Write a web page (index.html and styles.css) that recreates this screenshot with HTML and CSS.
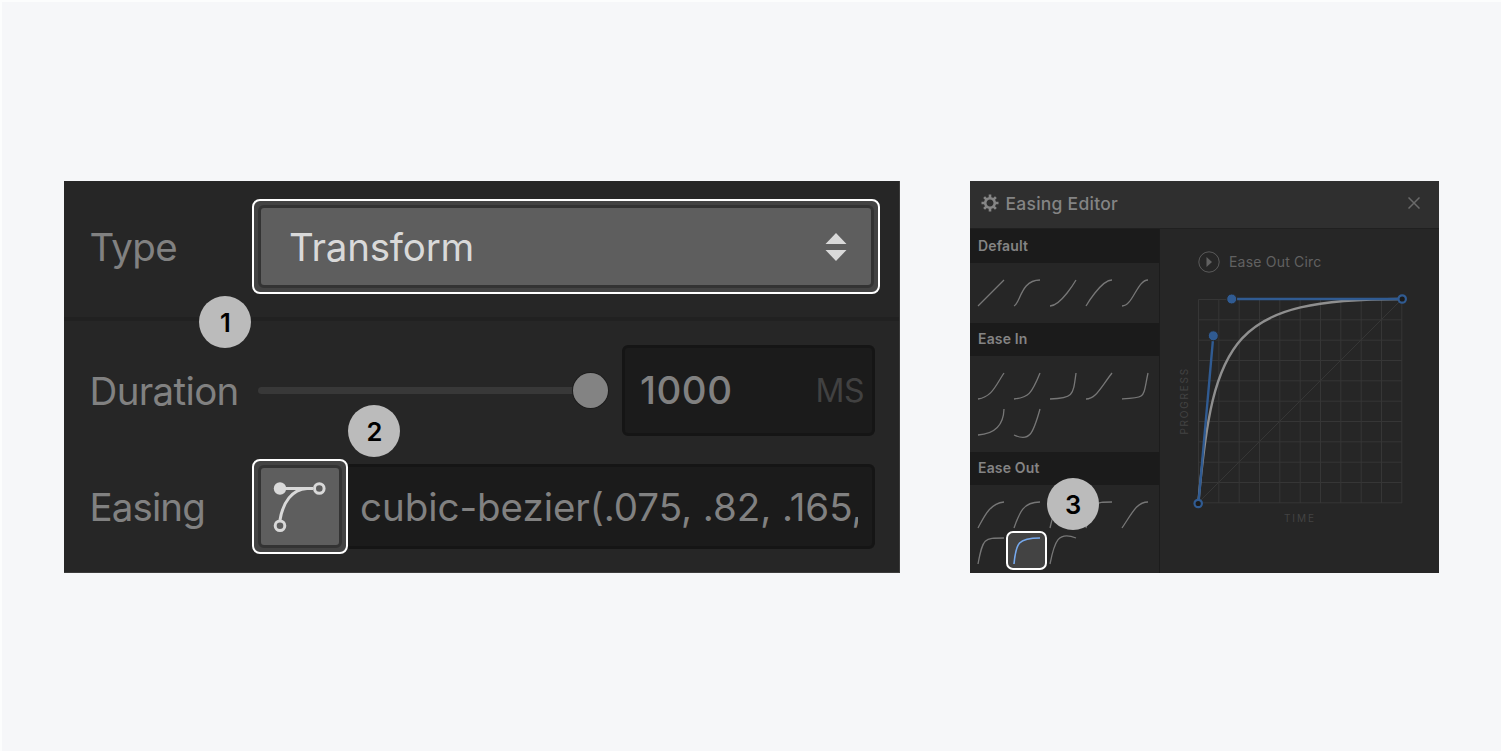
FILE: index.html
```html
<!DOCTYPE html>
<html lang="en">
<head>
  <meta charset="utf-8">
  <title>Easing Editor</title>
  <link rel="stylesheet" href="styles.css">
</head>
<body>
  <main class="stage">
    <section class="panel settings">
      <div class="row row-type">
        <label class="label label-type">Type</label>
        <div class="highlight highlight-select">
          <div class="select">
            <span class="select-value">Transform</span>
            <svg class="arrows" width="22" height="28" viewBox="0 0 22 28">
              <path d="M11 0L21.500 11H.5zM.5 17H21.500L11 28z"/>
            </svg>
          </div>
        </div>
      </div>
      <div class="row row-duration">
        <label class="label label-duration">Duration</label>
        <div class="slider">
          <div class="track"></div>
          <div class="knob"></div>
        </div>
        <div class="input input-duration">
          <span class="number">1000</span>
          <span class="unit">MS</span>
        </div>
      </div>
      <div class="row row-easing">
        <label class="label label-easing">Easing</label>
        <div class="highlight highlight-button">
          <div class="curve-button">
            <svg width="54" height="52" viewBox="0 0 54 52">
              <path class="stroke" d="M7 7.500H40M7 39C10 21 19 8.500 34 7.500"/>
              <circle class="dot" cx="7" cy="7.500" r="6.200"/>
              <circle class="stroke" cx="46.300" cy="7.500" r="4.800"/>
              <circle class="stroke" cx="7" cy="44.800" r="4.800"/>
            </svg>
          </div>
        </div>
        <div class="input input-easing"><span class="bezier">cubic-bezier(.075, .82, .165,</span></div>
      </div>
      <span class="badge badge-1">1</span>
      <span class="badge badge-2">2</span>
    </section>

    <section class="panel editor">
      <header class="editor-header">
        <svg class="gear" width="18" height="18" viewBox="-9 -9 18 18">
          <circle r="4.800"/>
          <path d="M0-5V-8.500M0 5V8.500M-5 0H-8.500M5 0H8.500M3.500-3.500L5.900-5.900M-3.500-3.500L-5.900-5.900M3.500 3.500L5.900 5.900M-3.500 3.500L-5.900 5.900"/>
        </svg>
        <h1 class="title">Easing Editor</h1>
        <svg class="close" width="12" height="12" viewBox="0 0 12 12"><path d="M.5 .5L11.500 11.500M11.500 .5L.5 11.500"/></svg>
      </header>
      <div class="editor-body">
        <aside class="sidebar">
          <h2 class="group-title group-title-first">Default</h2>
          <div class="curves curves-default">
            <svg class="curve" viewBox="0 0 1 1"><path d="M0 1L1 0"/></svg>
            <svg class="curve" viewBox="0 0 1 1"><path d="M0 1C.25 .9 .25 0 1 0"/></svg>
            <svg class="curve" viewBox="0 0 1 1"><path d="M0 1C.42 1 1 0 1 0"/></svg>
            <svg class="curve" viewBox="0 0 1 1"><path d="M0 1C0 1 .58 0 1 0"/></svg>
            <svg class="curve" viewBox="0 0 1 1"><path d="M0 1C.42 1 .58 0 1 0"/></svg>
          </div>
          <h2 class="group-title">Ease In</h2>
          <div class="curves curves-in">
            <svg class="curve" viewBox="0 0 1 1"><path d="M0 1C.55 .915 .68 .47 1 0"/></svg>
            <svg class="curve" viewBox="0 0 1 1"><path d="M0 1C.55 .945 .675 .81 1 0"/></svg>
            <svg class="curve" viewBox="0 0 1 1"><path d="M0 1C.895 .97 .885 .88 1 0"/></svg>
            <svg class="curve" viewBox="0 0 1 1"><path d="M0 1C.37 1 .545 .585 1 0"/></svg>
            <svg class="curve" viewBox="0 0 1 1"><path d="M0 1C.95 .95 .795 .965 1 0"/></svg>
            <svg class="curve" viewBox="0 0 1 1"><path d="M0 1C.6 .96 .98 .665 1 0"/></svg>
            <svg class="curve" viewBox="0 0 1 1"><path d="M0 1C.6 1.280 .735 .955 1 0"/></svg>
          </div>
          <h2 class="group-title">Ease Out</h2>
          <div class="curves curves-out">
            <svg class="curve" viewBox="0 0 1 1"><path d="M0 1C.25 .54 .45 .06 1 0"/></svg>
            <svg class="curve" viewBox="0 0 1 1"><path d="M0 1C.215 .39 .355 0 1 0"/></svg>
            <svg class="curve" viewBox="0 0 1 1"><path d="M0 1C.165 .16 .44 0 1 0"/></svg>
            <svg class="curve" viewBox="0 0 1 1"><path d="M0 1C.23 0 .32 0 1 0"/></svg>
            <svg class="curve" viewBox="0 0 1 1"><path d="M0 1C.39 .425 .565 0 1 0"/></svg>
            <svg class="curve" viewBox="0 0 1 1"><path d="M0 1C.19 0 .22 0 1 0"/></svg>
            <div class="curve-selected">
              <svg class="curve" viewBox="0 0 1 1"><path d="M0 1C.075 .18 .165 0 1 0"/></svg>
            </div>
            <svg class="curve" viewBox="0 0 1 1"><path d="M0 1C.175 .115 .32 -.275 1 0"/></svg>
          </div>
        </aside>
        <div class="preview">
          <div class="preview-head">
            <svg width="22" height="22" viewBox="0 0 22 22">
              <circle class="play-ring" cx="11" cy="11" r="10.200"/>
              <path class="play-arrow" d="M8.500 6L14 11L8.500 16z"/>
            </svg>
            <span class="preview-name">Ease Out Circ</span>
          </div>
          <div class="chart-row">
            <span class="axis axis-y">PROGRESS</span>
            <svg class="chart" width="204" height="204" viewBox="0 0 204 204">
              <path class="grid" d="M.5 .5H204M.5 20.800H204M.5 41.200H204M.5 61.500H204M.5 81.800H204M.5 102.200H204M.5 122.500H204M.5 142.800H204M.5 163.200H204M.5 183.500H204M.5 203.800H204"/>
              <path class="grid" d="M.5 .5V204M20.800 .5V204M41.200 .5V204M61.500 .5V204M81.800 .5V204M102.200 .5V204M122.500 .5V204M142.800 .5V204M163.200 .5V204M183.500 .5V204M203.800 .5V204"/>
              <path class="diagonal" d="M0 204L204 0"/>
              <path class="ease" d="M.3 204C15.500 37 34 0 204 0"/>
              <path class="handle" d="M.5 204L15.300 37M33.700 0H204"/>
              <circle class="point" cx="15.300" cy="36.800" r="5"/>
              <circle class="point" cx="33.700" cy="0" r="5"/>
              <circle class="anchor" cx=".2" cy="204.500" r="3.700"/>
              <circle class="anchor" cx="204.200" cy="0" r="3.700"/>
            </svg>
          </div>
          <span class="axis axis-x">TIME</span>
        </div>
      </div>
      <span class="badge badge-3">3</span>
    </section>
  </main>
</body>
</html>
```
FILE: styles.css
```css
* {
  box-sizing: border-box;
}

body {
  margin: 0;
  font-family: Inter, "Liberation Sans", sans-serif;
  background-color: #f6f7f9;
}

.stage {
  display: flex;
  align-items: flex-start;
  gap: 70px;
  height: 751px;
  padding: 179px 0 0 62px;
  border-top: 2px solid #fcfdfd;
  border-left: 2px solid #fcfdfd;
  overflow: hidden;
}

.panel {
  position: relative;
  height: 392px;
  background-color: #262626;
}

/* Left panel */
.settings {
  width: 836px;
  border-right: 1px solid #3c3c3c;
  border-bottom: 1px solid #3c3c3c;
  color: #818181;
  font-size: 38.5px;
}

.row {
  display: flex;
  align-items: center;
}

.row-type {
  height: 139.5px;
  padding: 0 0 4px;
  border-bottom: 4px solid #212121;
}

.row-duration {
  height: 91px;
  margin-top: 24px;
}

.row-easing {
  height: 95px;
  margin-top: 23px;
}

.label {
  width: 188px;
  padding-left: 25.5px;
  letter-spacing: -0.65px;
  white-space: nowrap;
}

.label-duration {
  padding-top: 1px;
}

.label-easing {
  padding-top: 2px;
  letter-spacing: -0.9px;
}

.highlight {
  padding: 4px;
  border: 2px solid #fff;
  border-radius: 8px;
  background-color: #434343;
}

.select,
.curve-button {
  border: 3px solid #333;
  border-radius: 6px;
  background-color: #5e5e5e;
}

.highlight-select {
  width: 628px;
  height: 95px;
}

.select {
  display: flex;
  align-items: center;
  justify-content: space-between;
  height: 83px;
  padding: 0 24px 0 28px;
  color: #d9d9d9;
  letter-spacing: -0.2px;
}

.arrows {
  fill: #d9d9d9;
}

.slider {
  display: flex;
  align-items: center;
  width: 351px;
  margin: 0 13px 0 6px;
}

.track {
  width: 317px;
  height: 7px;
  border-radius: 4px 0 0 4px;
  background-color: #383838;
}

.knob {
  width: 35px;
  height: 35px;
  flex: none;
  margin-left: -2px;
  border-radius: 50%;
  background-color: #838383;
  box-shadow: 0 0 0 1px #1d1d1d;
}

.input {
  display: flex;
  align-items: center;
  border: 3px solid #151515;
  border-radius: 6px;
  background-color: #1b1b1b;
}

.input-duration {
  justify-content: space-between;
  width: 253px;
  height: 91px;
  padding: 0 8px 0 15px;
}

.number {
  font-weight: 500;
  letter-spacing: 0.5px;
}

.unit {
  font-size: 32px;
  letter-spacing: -0.5px;
  color: #414141;
}

.highlight-button {
  z-index: 1;
  width: 96px;
  height: 95px;
}

.curve-button {
  display: flex;
  align-items: center;
  justify-content: center;
  height: 83px;
}

.curve-button svg {
  position: relative;
  top: 1px;
}

.curve-button .stroke {
  fill: none;
  stroke: #d9d9d9;
  stroke-width: 3;
}

.curve-button .dot {
  fill: #d9d9d9;
}

.input-easing {
  width: 533px;
  height: 85px;
  margin-left: -6px;
  padding: 2px 14px 0 15px;
}

.bezier {
  overflow: hidden;
  letter-spacing: -0.05px;
  white-space: nowrap;
}

/* Numbered callouts */
.badge {
  position: absolute;
  width: 52px;
  height: 52px;
  border-radius: 50%;
  background-color: #bbb;
  color: #000;
  font-size: 25.5px;
  font-weight: 600;
  line-height: 53px;
  text-align: center;
  z-index: 2;
}

.badge-1 {
  left: 135.3px;
  top: 115px;
}

.badge-2 {
  left: 284.4px;
  top: 224px;
}

.badge-3 {
  left: 77px;
  top: 297px;
}

/* Right panel */
.editor {
  width: 469px;
}

.editor-header {
  display: flex;
  align-items: center;
  height: 48px;
  padding: 0 19.5px 3px 11px;
  border-bottom: 1px solid #202020;
  background-color: #2f2f2f;
}

.gear {
  fill: none;
  stroke: #858585;
  stroke-width: 2.6;
}

.title {
  margin: 0 auto 0 6.5px;
  color: #848484;
  font-size: 17.5px;
  font-weight: 500;
  letter-spacing: 0.25px;
}

.close {
  fill: none;
  stroke: #6a6a6a;
  stroke-width: 1.5;
}

.editor-body {
  display: flex;
  height: 344px;
}

.sidebar {
  width: 190px;
  border-right: 1px solid #1c1c1c;
  overflow: hidden;
}

.group-title {
  height: 33px;
  margin: 0;
  padding-left: 8px;
  background-color: #1b1b1b;
  color: #848484;
  font-size: 14px;
  font-weight: 600;
  letter-spacing: 0.15px;
  line-height: 31px;
}

.group-title-first {
  height: 34px;
  line-height: 33px;
}

.curves {
  display: grid;
  grid-template-columns: repeat(5, 26px);
  grid-auto-rows: 26px;
  gap: 10px;
  padding: 17px 8px;
}

.curves-default {
  height: 60px;
}

.curves-in {
  height: 96px;
}

.curve {
  width: 26px;
  height: 26px;
  overflow: visible;
  fill: none;
  stroke: #777;
  stroke-width: 1.3;
}

.curve path {
  vector-effect: non-scaling-stroke;
}

.curve-selected {
  width: 41px;
  height: 39px;
  margin: -7px 0 0 -8px;
  padding: 5px 6px;
  border: 2px solid #fff;
  border-radius: 7px;
  background-color: #434343;
}

.curve-selected .curve {
  stroke: #76a9ee;
  stroke-width: 1.6;
}

.preview {
  display: flex;
  flex: 1;
  flex-direction: column;
  padding: 22px 0 0 19px;
}

.preview-head {
  display: flex;
  align-items: center;
  gap: 9px;
  height: 22px;
  padding-left: 19px;
}

.preview-name {
  padding-bottom: 2px;
  color: #616161;
  font-size: 14px;
  letter-spacing: 0.2px;
}

.play-ring {
  fill: none;
  stroke: #5a5a5a;
}

.play-arrow {
  fill: #626262;
}

.chart-row {
  display: flex;
  align-items: center;
  margin-top: 26px;
}

.axis {
  color: #434343;
  font-size: 10px;
  letter-spacing: 2px;
  line-height: 12px;
}

.axis-y {
  width: 19px;
  padding-left: 9px;
  writing-mode: vertical-rl;
  letter-spacing: 1.8px;
  transform: rotate(180deg) translateX(1px);
}

.axis-x {
  width: 204px;
  margin: 9px 0 0 19px;
  text-align: center;
}

.chart {
  overflow: visible;
  fill: none;
}

.grid {
  stroke: #363636;
}

.diagonal {
  stroke: #363636;
}

.ease {
  stroke: #8f8f8f;
  stroke-width: 2.4;
}

.handle {
  stroke: #305b92;
  stroke-width: 2.4;
}

.point {
  fill: #305b92;
  stroke: #262626;
}

.anchor {
  fill: #1b1b1b;
  stroke: #305b92;
  stroke-width: 2.2;
}
```
